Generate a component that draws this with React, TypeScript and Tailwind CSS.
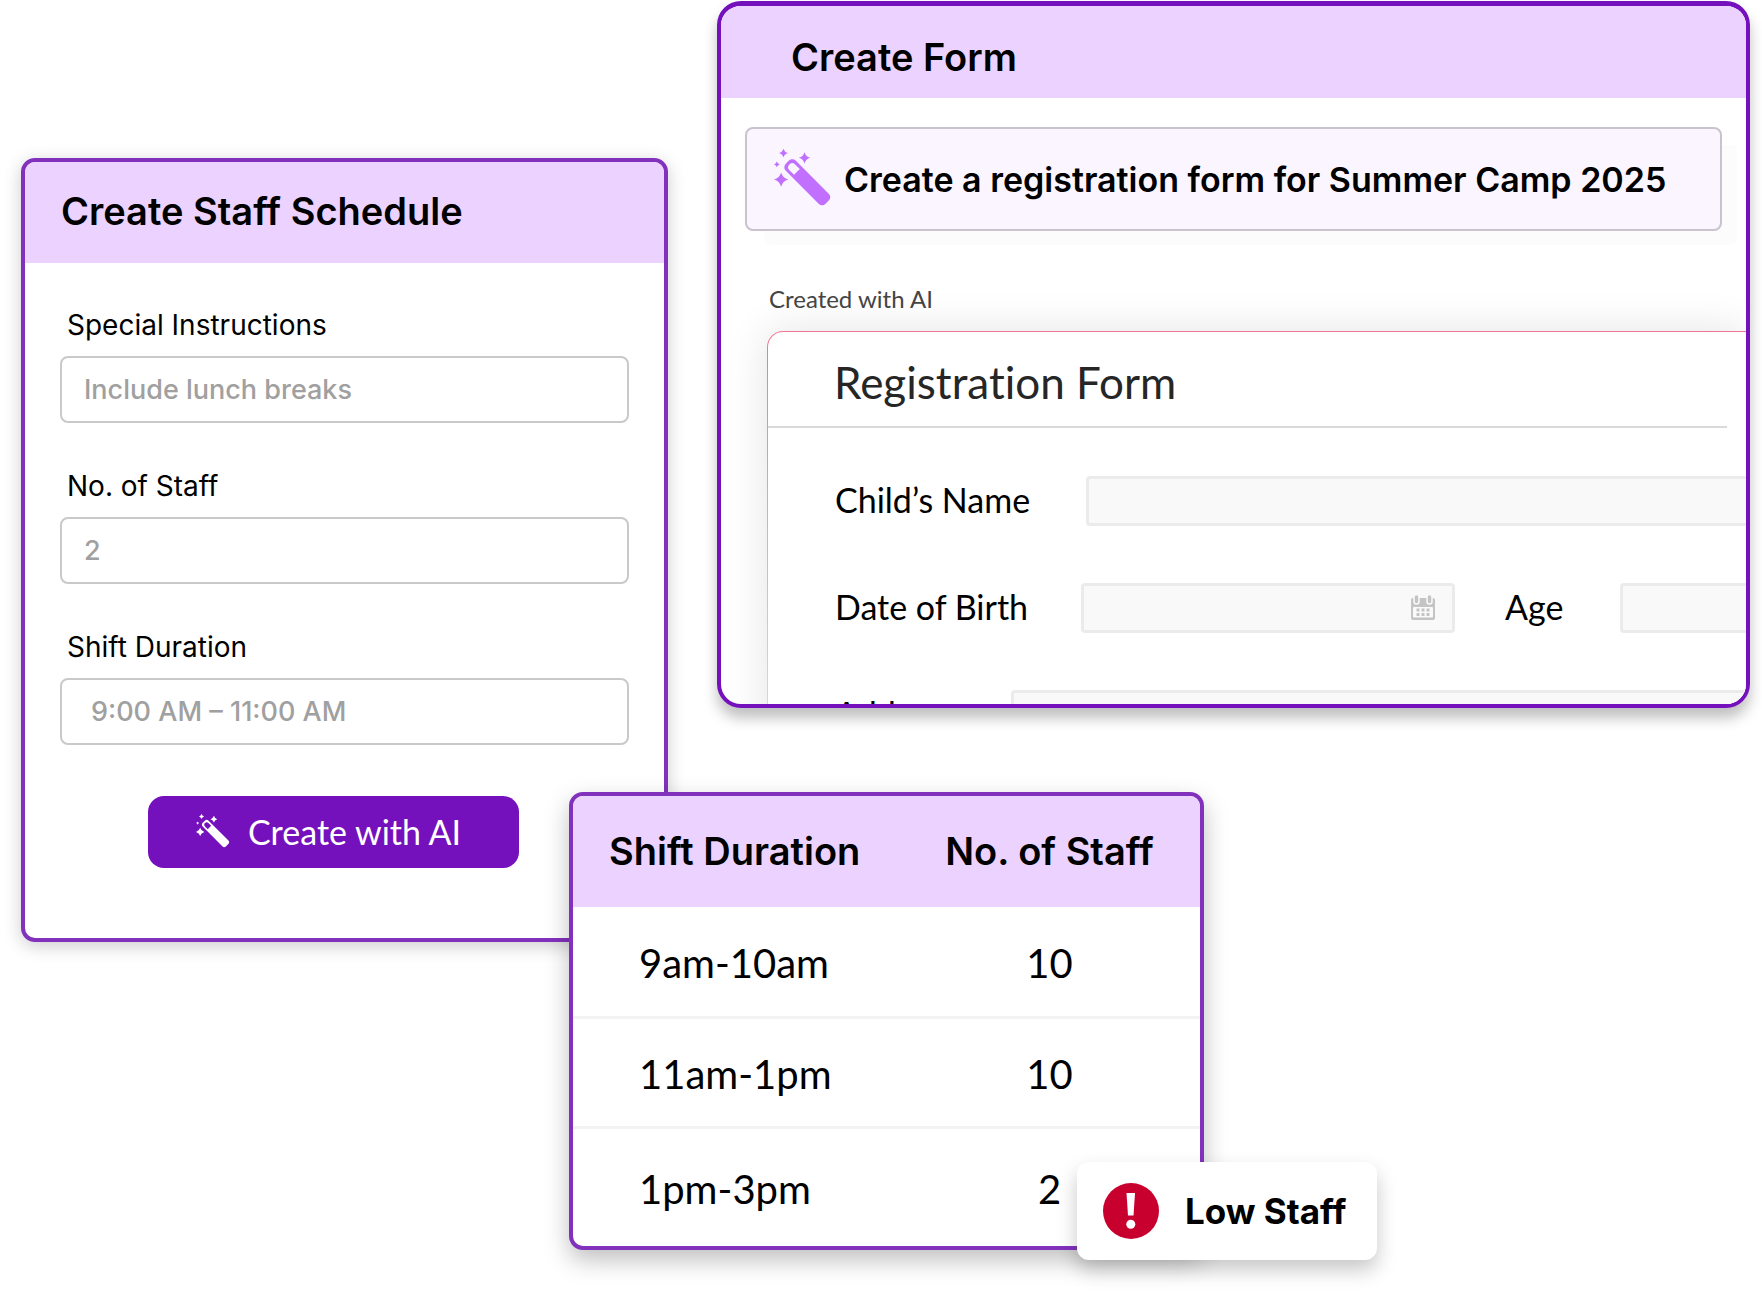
import { useState } from "react";

type Field = { id: string; label: string; placeholder: string; inset: string };

const FIELDS: Field[] = [
  { id: "instructions", label: "Special Instructions", placeholder: "Include lunch breaks", inset: "pl-[22px]" },
  { id: "staff", label: "No. of Staff", placeholder: "2", inset: "pl-[22px]" },
  { id: "shift", label: "Shift Duration", placeholder: "9:00 AM – 11:00 AM", inset: "pl-[29px]" },
];

const SHIFTS = [
  { time: "9am-10am", staff: 10 },
  { time: "11am-1pm", staff: 10 },
  { time: "1pm-3pm", staff: 2 },
];

// Four-pointed star centred on x, y
function sparkle(x: number, y: number, r: number) {
  const k = r * 0.22;
  return `M${x} ${y - r}Q${x + k} ${y - k} ${x + r} ${y}Q${x + k} ${y + k} ${x} ${y + r}Q${x - k} ${y + k} ${x - r} ${y}Q${x - k} ${y - k} ${x} ${y - r}Z`;
}

function Wand({ className }: { className: string }) {
  return (
    <svg viewBox="0 0 57 57" fill="currentColor" className={className} aria-hidden="true">
      <path d={sparkle(9.3, 4, 4.2)} />
      <path d={sparkle(30, 8.7, 5.6)} />
      <path d={sparkle(2.8, 15.2, 2.8)} />
      <path d={sparkle(7, 30, 7)} />
      <path
        transform="translate(13 13) rotate(45)"
        fillRule="evenodd"
        d="M5 -7H51A4.500 4.500 0 0 1 55.500 -2.500V2.500A4.500 4.500 0 0 1 51 7H5A5 5 0 0 1 0 2V-2A5 5 0 0 1 5 -7ZM7 -4A4 4 0 0 0 7 4H13.500V-4Z"
      />
    </svg>
  );
}

function CalendarIcon() {
  return (
    <svg viewBox="0 0 24 25" className="h-[25px] w-6 text-[#c4c4c4]" aria-hidden="true">
      <rect x="0" y="3" width="24" height="22" rx="2" fill="currentColor" />
      <rect x="2" y="12" width="20" height="10.500" rx="1" fill="#fafafa" />
      <g fill="currentColor">
        {[5.5, 10.5, 15.5].map((x) => (
          <g key={x}>
            <rect x={x} y="13.500" width="3" height="3" />
            <rect x={x} y="18" width="3" height="3" />
          </g>
        ))}
      </g>
      <g fill="currentColor" stroke="#fafafa" strokeWidth="1.500">
        <rect x="3" y="-0.500" width="5" height="9.500" rx="2.500" />
        <rect x="16" y="-0.500" width="5" height="9.500" rx="2.500" />
      </g>
    </svg>
  );
}

function StaffSchedule() {
  const [values, setValues] = useState<Record<string, string>>({});

  return (
    <section className="mt-[158px] self-start rounded-[14px] border-4 border-[#8231bd] bg-white shadow-[0_4px_18px_rgba(0,0,0,0.2)]">
      <header className="flex h-[101px] items-center rounded-t-[10px] bg-[#ebd2ff] pb-1 pl-9">
        <h2 className="font-[Inter] text-[38px] leading-[44px] font-semibold">Create Staff Schedule</h2>
      </header>
      <form className="px-[35px] pt-[46px] pb-[70px]" onSubmit={(e) => e.preventDefault()}>
        <div className="flex flex-col gap-[47px]">
          {FIELDS.map((f) => (
            <div key={f.id} className="flex flex-col gap-[15px] font-[Inter]">
              <label htmlFor={f.id} className="pl-[7px] text-[28px] leading-8">
                {f.label}
              </label>
              <input
                id={f.id}
                placeholder={f.placeholder}
                value={values[f.id] ?? ""}
                onChange={(e) => setValues({ ...values, [f.id]: e.target.value })}
                className={`h-[67px] w-full rounded-lg border-2 border-[#c9c9c9] text-[27px] font-medium placeholder:text-[#a0a0a0] ${f.inset}`}
              />
            </div>
          ))}
        </div>
        <button
          type="submit"
          className="mt-[51px] ml-[88px] flex h-18 w-[371px] items-center gap-[18px] rounded-2xl bg-[#7411bd] pb-[2px] pl-12 text-[34px] text-white"
        >
          <Wand className="size-[34px]" />
          Create with AI
        </button>
      </form>
    </section>
  );
}

const BOX = "h-[50px] rounded-sm border-[3px] border-[#ebebeb] bg-[#f9f9f9]";

function RegistrationForm() {
  return (
    <div className="ml-[46px] rounded-tl-2xl bg-linear-to-b from-[#f27490] to-[#fbd5df] pt-px pl-px shadow-[0_0_44px_rgba(0,0,0,0.11)]">
      <div className="rounded-tl-[15px] bg-white pb-10">
        <div className="mr-[19px] flex h-[96px] items-center border-b-2 border-[#dadada] pt-[6px] pl-[66px]">
          <h3 className="text-[44px] leading-[50px] text-[#262626]">Registration Form</h3>
        </div>
        <div className="flex flex-col gap-[57px] pt-12 pl-[67px] text-[34px] leading-[48px]">
          <div className="flex">
            <label htmlFor="child" className="w-[251px]">
              Child’s Name
            </label>
            <input id="child" className={`${BOX} -mr-2 flex-1`} />
          </div>
          <div className="flex">
            <label htmlFor="birth" className="w-[246px]">
              Date of Birth
            </label>
            <div className="relative w-[374px]">
              <input id="birth" className={`${BOX} w-full`} />
              <span className="absolute top-3 right-5">
                <CalendarIcon />
              </span>
            </div>
            <label htmlFor="age" className="ml-[50px] w-[115px]">
              Age
            </label>
            <input id="age" className={`${BOX} -mr-2 min-w-0 flex-1`} />
          </div>
          <div className="flex">
            <label htmlFor="address" className="w-[176px]">
              Address
            </label>
            <input id="address" className={`${BOX} -mr-2 flex-1`} />
          </div>
        </div>
      </div>
    </div>
  );
}

function CreateForm() {
  return (
    <section className="mt-px h-[707px] overflow-hidden rounded-3xl border-4 border-t-[5px] border-[#7411bd] bg-white shadow-[0_10px_14px_rgba(0,0,0,0.25)]">
      <header className="flex h-[92px] items-center bg-[#ebd2ff] pt-[10px] pl-[70px]">
        <h2 className="font-[Inter] text-[38px] leading-[44px] font-semibold">Create Form</h2>
      </header>
      <div className="mx-6 mt-[29px] flex h-[104px] items-center rounded-lg border-2 border-[#c9c3ce] bg-[#faf5ff] pb-[2px] pl-[27px] shadow-[17px_16px_0_-2px_#fcfcfc]">
        <Wand className="size-[58px] shrink-0 text-[#c06fff]" />
        <p className="pt-[2px] pl-3 font-[Inter] text-[34px] font-semibold whitespace-nowrap">
          Create a registration form for Summer Camp 2025
        </p>
      </div>
      <p className="mt-[52px] mb-4 ml-12 text-2xl leading-8 text-[#444]">Created with AI</p>
      <RegistrationForm />
    </section>
  );
}

function ShiftTable() {
  return (
    <section className="relative mt-[84px] -ml-[148px] w-[635px] rounded-[14px] border-4 border-[#8231bd] bg-white shadow-[0_10px_24px_rgba(0,0,0,0.25)]">
      <div className="overflow-hidden rounded-[10px]">
        <table className="w-full table-fixed border-collapse text-black">
          <thead>
            <tr className="h-[111px] bg-[#ebd2ff] font-[Inter] text-[38px]">
              <th className="w-[326px] pl-9 text-left font-semibold">Shift Duration</th>
              <th className="font-semibold">No. of Staff</th>
            </tr>
          </thead>
          <tbody>
            {SHIFTS.map((s) => (
              <tr
                key={s.time}
                className="h-[110px] border-b-[3px] border-[#f3f3f3] text-[40px] last:h-[119px] last:border-0"
              >
                <td className="pt-1 pl-[66px]">{s.time}</td>
                <td className="pt-1 text-center">{s.staff}</td>
              </tr>
            ))}
          </tbody>
        </table>
      </div>
      <div
        role="status"
        className="absolute -right-[177px] -bottom-[14px] flex h-[98px] w-[300px] items-center gap-[26px] rounded-xl bg-white pl-[26px] shadow-[0_10px_20px_rgba(0,0,0,0.22)]"
      >
        <svg viewBox="0 0 56 56" className="size-14 shrink-0" aria-hidden="true">
          <circle cx="28" cy="28" r="28" fill="#c8002e" />
          <path d="M23.500 10H32L30.500 32.500H25Z" fill="#fff" />
          <circle cx="27.800" cy="41.300" r="4.500" fill="#fff" />
        </svg>
        <span className="font-[Inter] text-[35px] font-bold whitespace-nowrap">Low Staff</span>
      </div>
    </section>
  );
}

export default function App() {
  return (
    <main className="grid min-h-screen grid-cols-[647fr_1033fr] gap-x-[49px] overflow-hidden bg-white pr-3 pb-12 pl-[21px] font-[Lato] text-black [font-variant-ligatures:no-common-ligatures]">
      <StaffSchedule />
      <div className="min-w-0">
        <CreateForm />
        <ShiftTable />
      </div>
    </main>
  );
}
